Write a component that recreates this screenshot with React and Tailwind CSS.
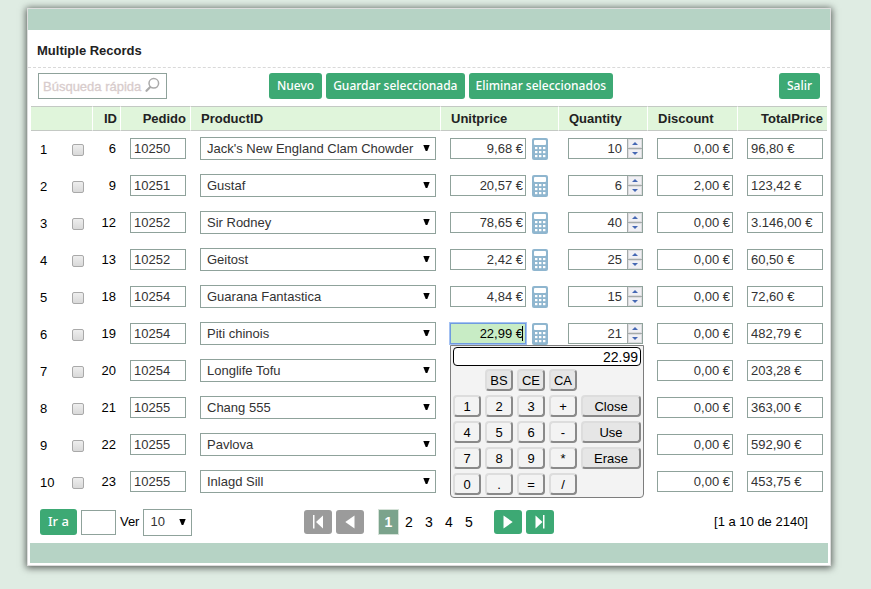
import React from 'react';

const products = [
  { id: 6, order: '10250', name: "Jack's New England Clam Chowder", unit: '9,68 €', qty: 10, discount: '0,00 €', total: '96,80 €' },
  { id: 9, order: '10251', name: 'Gustaf', unit: '20,57 €', qty: 6, discount: '2,00 €', total: '123,42 €' },
  { id: 12, order: '10252', name: 'Sir Rodney', unit: '78,65 €', qty: 40, discount: '0,00 €', total: '3.146,00 €' },
  { id: 13, order: '10252', name: 'Geitost', unit: '2,42 €', qty: 25, discount: '0,00 €', total: '60,50 €' },
  { id: 18, order: '10254', name: 'Guarana Fantastica', unit: '4,84 €', qty: 15, discount: '0,00 €', total: '72,60 €' },
  { id: 19, order: '10254', name: 'Piti chinois', unit: '22,99 €', qty: 21, discount: '0,00 €', total: '482,79 €', active: true },
  { id: 20, order: '10254', name: 'Longlife Tofu', unit: '9,68 €', qty: 21, discount: '0,00 €', total: '203,28 €' },
  { id: 21, order: '10255', name: 'Chang 555', unit: '18,15 €', qty: 20, discount: '0,00 €', total: '363,00 €' },
  { id: 22, order: '10255', name: 'Pavlova', unit: '16,94 €', qty: 35, discount: '0,00 €', total: '592,90 €' },
  { id: 23, order: '10255', name: 'Inlagd Sill', unit: '18,15 €', qty: 25, discount: '0,00 €', total: '453,75 €' },
];

const field = 'block border border-[#8fa29b] bg-white text-[13px] text-[#333] outline-none';
const moneyField = field + ' h-[21px] w-[76px] pr-[2px] text-right';

function GreenButton({ children, className = 'px-[7px] text-xs' }) {
  return (
    <button type="button" className={"h-[26px] rounded-[3px] bg-[#3da974] font-['Noto_Sans',sans-serif] font-medium whitespace-nowrap text-white " + className}>
      {children}
    </button>
  );
}

function SelectBox({ label, value, className }) {
  return (
    <div className={'relative ' + className}>
      <select aria-label={label} defaultValue={value} className={field + ' h-full w-full appearance-none pl-[6px]'}>
        <option>{value}</option>
      </select>
      <svg viewBox="0 0 7 7" className="pointer-events-none absolute inset-y-0 right-[6px] h-full w-[7px]">
        <path d="M0.3 0h6.4L4.3 6H2.7z" fill="#000" />
      </svg>
    </div>
  );
}

function CalculatorIcon() {
  const xs = [3, 7, 11];
  const ys = [10, 14, 18];
  return (
    <svg viewBox="0 0 16 22" className="h-[22px] w-4">
      <rect width="16" height="22" rx="2" fill="#8fb6cf" />
      <rect x="2" y="2" width="12" height="5" rx="1" fill="#fff" />
      {ys.map((y) => xs.map((x) => <rect key={x + '-' + y} x={x} y={y - 1} width="2.4" height="2.2" fill="#fff" />))}
    </svg>
  );
}

function Spinner({ value }) {
  const button = 'flex h-[9px] w-[14px] items-center justify-center border border-[#dcdcde] bg-[#f0f0f4]';
  return (
    <div className="flex h-[21px] w-[75px] border border-[#8fa29b] bg-white">
      <input aria-label="Quantity" defaultValue={value} className="w-[58px] pr-[5px] text-right text-[13px] text-[#333] outline-none" />
      <div className="flex w-[15px] flex-col justify-between bg-[#a4aaaa] pl-px">
        <button type="button" aria-label="Increase quantity" className={button}>
          <svg viewBox="0 0 6 3" className="h-[3px] w-[6px]"><path d="M0 3L3 0l3 3z" fill="#4668b4" /></svg>
        </button>
        <button type="button" aria-label="Decrease quantity" className={button}>
          <svg viewBox="0 0 6 3" className="h-[3px] w-[6px]"><path d="M0 0l3 3 3-3z" fill="#4668b4" /></svg>
        </button>
      </div>
    </div>
  );
}

const keyRows = [
  [null, 'BS', 'CE', 'CA', null],
  ['1', '2', '3', '+', 'Close'],
  ['4', '5', '6', '-', 'Use'],
  ['7', '8', '9', '*', 'Erase'],
  ['0', '.', '=', '/', null],
];

function CalculatorPopup() {
  return (
    <div className="absolute top-full left-0 z-10 mt-px w-[194px] rounded-b-[4px] border border-[#7d7d7d] bg-[#f3f3f3] px-[2px] pt-px pb-[2px]">
      <input aria-label="Calculator display" defaultValue="22.99" className="block h-[19px] w-full rounded-[4px] border border-black bg-white pr-[2px] text-right text-sm text-black outline-none" />
      <div className="mt-[3px] grid grid-cols-[28px_28px_28px_28px_60px] gap-1">
        {keyRows.flat().map((key, i) =>
          key ? (
            <button
              key={i}
              type="button"
              className={
                'flex h-[22px] items-center justify-center rounded-[4px] border-2 border-t-[#ddd] border-r-[#8a8a8a] border-b-[#8a8a8a] border-l-[#ddd] pt-px text-[13px] text-black ' +
                (key.length > 1 ? 'bg-[#e6e6e6]' : 'bg-[#f3f3f3]')
              }
            >
              {key}
            </button>
          ) : (
            <span key={i} />
          )
        )}
      </div>
    </div>
  );
}

function ProductRow({ row, index }) {
  return (
    <tr className="h-[37px]">
      <td className="pl-[9px]">
        <div className="flex items-center">
          <span className="w-8">{index + 1}</span>
          <input type="checkbox" aria-label={'Select record ' + (index + 1)} className="h-3 w-3 appearance-none rounded-[2px] border border-[#a9a9a9] bg-linear-to-b from-[#eee] to-[#d9d9d9]" />
        </div>
      </td>
      <td className="pr-[5px] pb-[2px] text-right">{row.id}</td>
      <td className="pb-[2px] pl-[9px]">
        <input aria-label="Pedido" defaultValue={row.order} className={field + ' h-[21px] w-14 pl-[3px]'} />
      </td>
      <td className="pr-[5px] pb-[2px] pl-[9px]">
        <SelectBox label="ProductID" value={row.name} className="h-[23px]" />
      </td>
      <td className="pb-[2px] pl-[9px]">
        <div className="relative flex h-[21px] gap-[6px]">
          {row.active ? (
            <div className="relative">
              <input aria-label="Unitprice" defaultValue={row.unit} className="block h-[21px] w-[76px] border border-[#6f9be0] bg-[#c8ecc5] pr-[2px] text-right text-[13px] text-black ring-1 ring-[#a3c1f2] outline-none" />
              <span className="absolute top-[3px] right-[3px] h-[15px] w-px bg-black" />
            </div>
          ) : (
            <input aria-label="Unitprice" defaultValue={row.unit} className={moneyField} />
          )}
          <button type="button" aria-label="Open calculator" className="h-[22px]"><CalculatorIcon /></button>
          {row.active && <CalculatorPopup />}
        </div>
      </td>
      <td className="pb-[2px] pl-[9px]"><Spinner value={row.qty} /></td>
      <td className="pb-[2px] pl-[9px]">
        <input aria-label="Discount" defaultValue={row.discount} className={moneyField} />
      </td>
      <td className="pb-[2px] pl-[9px]">
        <input aria-label="TotalPrice" defaultValue={row.total} className={field + ' h-[21px] w-[76px] pl-[3px]'} />
      </td>
    </tr>
  );
}

const columns = [
  { label: '', width: 'w-[62px]', align: '' },
  { label: 'ID', width: 'w-[28px]', align: 'pr-[3px] text-right' },
  { label: 'Pedido', width: 'w-[70px]', align: 'pr-1 text-right' },
  { label: 'ProductID', width: '', align: 'pl-[10px] text-left' },
  { label: 'Unitprice', width: 'w-[118px]', align: 'pl-[10px] text-left' },
  { label: 'Quantity', width: 'w-[89px]', align: 'pl-[10px] text-left' },
  { label: 'Discount', width: 'w-[90px]', align: 'pl-[10px] text-left' },
  { label: 'TotalPrice', width: 'w-[89px]', align: 'pr-1 text-right' },
];

function PageArrow({ label, d, bar, active }) {
  return (
    <button type="button" aria-label={label} className={'flex h-6 w-7 items-center justify-center rounded-[3px] ' + (active ? 'bg-[#3da974]' : 'bg-[#9b9b9b]')}>
      <svg viewBox="0 0 28 24" className="h-6 w-7" fill="#fff">
        <path d={d} />
        {bar && <rect x={bar} y="5" width="1.5" height="13.5" />}
      </svg>
    </button>
  );
}

export default function App() {
  return (
    <div className="min-h-screen bg-[#dfece3] pt-2 pr-10 pb-[23px] pl-[27px] font-['Liberation_Sans',Arial,sans-serif] text-[13px] text-black">
      <main className="border border-[#ddd] bg-white shadow-[0_1px_7px_1px_rgba(0,0,0,0.6)]">
        <div className="h-[21px] bg-[#b6d3c5]" />
        <h1 className="flex h-[38px] items-center border-b border-dashed border-[#d9d9d9] px-[9px] pt-1 font-bold text-[#222]">Multiple Records</h1>

        <div className="flex items-center py-[5px] pr-[10px] pl-[10px]">
          <div className="relative w-[129px]">
            <input type="search" aria-label="Búsqueda rápida" placeholder="Búsqueda rápida" className="block h-[26px] w-full border border-[#8fa29b] bg-white pl-1 text-[13px] outline-none placeholder:text-[#d8cccc] placeholder:[-webkit-text-stroke:0.3px_#d8cccc]" />
            <svg viewBox="0 0 16 16" className="pointer-events-none absolute top-1 right-[6px] h-4 w-4" fill="none" stroke="#aaa" strokeLinecap="round">
              <circle cx="8.8" cy="6.3" r="4.8" strokeWidth="1.5" />
              <path d="M5 10.2L1.5 13.8" strokeWidth="2.2" />
            </svg>
          </div>
          <div className="ml-[102px] flex gap-1">
            <GreenButton className="px-2 text-xs">Nuevo</GreenButton>
            <GreenButton>Guardar seleccionada</GreenButton>
            <GreenButton>Eliminar seleccionados</GreenButton>
          </div>
          <GreenButton className="ml-auto px-2 text-xs">Salir</GreenButton>
        </div>

        <div className="px-[3px] pt-[2px]">
          <table className="w-full table-fixed border-separate border-spacing-0">
            <thead>
              <tr className="h-[25px]">
                {columns.map((c) => (
                  <th key={c.label} className={'border-y border-r border-y-[#c4c9c4] border-r-white bg-[#e0f5db] font-bold text-[#222] last:border-r-0 ' + c.width + ' ' + c.align}>
                    {c.label}
                  </th>
                ))}
              </tr>
            </thead>
            <tbody>
              {products.map((row, i) => (
                <ProductRow key={row.id} row={row} index={i} />
              ))}
            </tbody>
          </table>
        </div>

        <footer className="grid h-[42px] grid-cols-[1fr_auto_1fr] items-center px-3">
          <form className="flex items-center gap-1">
            <GreenButton className="px-2 text-[13px]">Ir a</GreenButton>
            <input aria-label="Ir a" className={field + ' h-[25px] w-[35px] px-1'} />
            <span>Ver</span>
            <SelectBox label="Ver" value="10" className="h-[27px] w-[49px]" />
          </form>
          <nav className="flex items-center gap-1">
            <PageArrow label="First page" d="M19 5.5v13L12 12z" bar="9" />
            <PageArrow label="Previous page" d="M18.5 5.5v13L9.3 12z" />
            <div className="mr-[11px] ml-[10px] flex items-center text-sm">
              <span className="flex h-[26px] w-[21px] items-center justify-center border border-[#d5e2d8] bg-[#7ba38c] font-bold text-white">1</span>
              <a href="#2" className="w-5 text-center">2</a>
              <a href="#3" className="w-5 text-center">3</a>
              <a href="#4" className="w-5 text-center">4</a>
              <a href="#5" className="w-5 text-center">5</a>
            </div>
            <PageArrow label="Next page" d="M9.5 5.5v13l9.2-6.5z" active />
            <PageArrow label="Last page" d="M9.5 5.5v13l7-6.5z" bar="17" active />
          </nav>
          <p className="pr-[10px] text-right">[1 a 10 de 2140]</p>
        </footer>
        <div className="mx-[2px] mb-[2px] h-5 bg-[#b6d3c5]" />
      </main>
    </div>
  );
}
